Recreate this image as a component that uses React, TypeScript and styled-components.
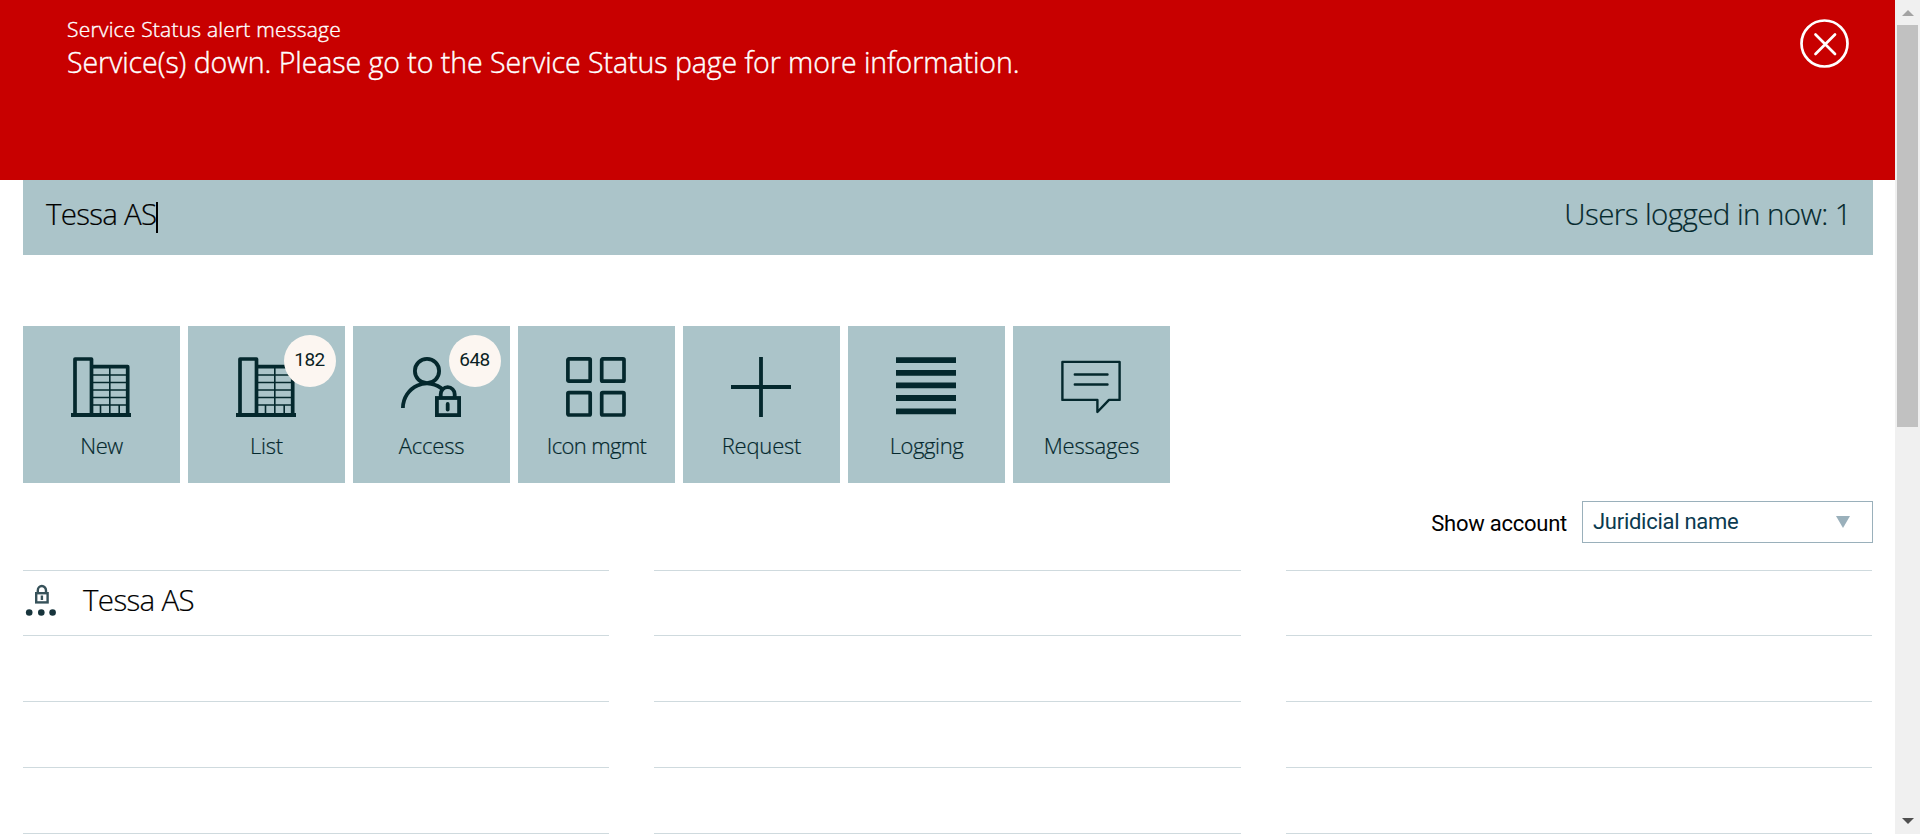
import React from "react";
import styled, { createGlobalStyle } from "styled-components";

const teal = "#abc4c9";
const ink = "#04282d";

const GlobalStyle = createGlobalStyle`
  * { box-sizing: border-box; }
  body {
    margin: 0;
    background: #fff;
    color: #000;
    font-family: "Open Sans", "Noto Sans", sans-serif;
    overflow: hidden;
  }
  svg { display: block; flex-shrink: 0; }
`;

const Screen = styled.div`
  display: flex;
  height: 834px;
  overflow: hidden;
`;

const Page = styled.main`
  flex: 1;
  min-width: 0;
`;

const Alert = styled.section`
  display: flex;
  justify-content: space-between;
  align-items: flex-start;
  height: 180px;
  padding: 14px 45px 0 67px;
  background: #c80000;
  color: #fff;
  font-weight: 300;
  -webkit-text-stroke: 0.4px #fff;
`;

const AlertTitle = styled.div`
  font-size: 21px;
  line-height: 30px;
  letter-spacing: 0.21px;
  white-space: nowrap;
`;

const AlertText = styled.div`
  font-size: 28.5px;
  line-height: 36px;
  letter-spacing: -0.05px;
  white-space: nowrap;
`;

const CloseButton = styled.button`
  margin: 4px 0 0;
  padding: 0;
  border: 0;
  background: none;
  color: #fff;
`;

const Content = styled.div`
  padding: 0 22px 0 23px;
`;

const CompanyBar = styled.header`
  display: flex;
  justify-content: space-between;
  align-items: flex-start;
  height: 75px;
  padding: 14px 22px 0 23px;
  background: ${teal};
  font-size: 29.5px;
  font-weight: 300;
  line-height: 40px;
  -webkit-text-stroke: 0.2px currentColor;
`;

const SearchField = styled.div`
  display: flex;
  align-items: center;
  letter-spacing: -0.75px;
`;

const Caret = styled.span`
  width: 2px;
  height: 31px;
  margin-top: 7px;
  background: #000;
`;

const UserCount = styled.div`
  color: ${ink};
  letter-spacing: -0.58px;
`;

const Tiles = styled.nav`
  display: flex;
  gap: 8px;
  margin-top: 71px;
`;

const Tile = styled.div`
  position: relative;
  display: flex;
  flex-direction: column;
  align-items: center;
  width: 157px;
  height: 157px;
  padding-top: 31px;
  background: ${teal};
  color: ${ink};

  > svg { margin-right: 1px; }
`;

const TileLabel = styled.span<{ $tracking: number }>`
  margin-top: 13px;
  font-size: 22px;
  font-weight: 300;
  line-height: 30px;
  letter-spacing: ${(p) => p.$tracking}px;
  white-space: nowrap;
  -webkit-text-stroke: 0.2px currentColor;
`;

const Badge = styled.span`
  position: absolute;
  top: 9px;
  right: 9px;
  width: 52px;
  height: 52px;
  padding-right: 1px;
  border-radius: 50%;
  background: #fcf6f1;
  color: #0b1f24;
  font: 400 19px/50px Roboto, sans-serif;
  letter-spacing: -0.5px;
  text-align: center;
`;

const FilterRow = styled.div`
  display: flex;
  justify-content: flex-end;
  gap: 15px;
  height: 42px;
  margin-top: 18px;
  font-family: Roboto, sans-serif;
  font-size: 22px;
  font-weight: 400;
`;

const FilterLabel = styled.span`
  line-height: 46px;
  letter-spacing: -0.25px;
`;

const Select = styled.div`
  display: flex;
  justify-content: space-between;
  align-items: center;
  width: 291px;
  padding: 0 22px 2px 10px;
  border: 1px solid #9ab0bb;
  color: #0b3a50;
  letter-spacing: -0.28px;

  > svg { margin-top: 2px; }
`;

const Columns = styled.div`
  display: grid;
  grid-template-columns: 586px 587px 586px;
  column-gap: 45px;
  margin-top: 27px;
`;

const Column = styled.div`
  border-top: 1px solid #cfdade;
`;

const Row = styled.div<{ $first?: boolean }>`
  display: flex;
  align-items: center;
  height: ${(p) => (p.$first ? 65 : 66)}px;
  border-bottom: 1px solid #cfdade;

  > svg { margin-bottom: 8px; }
`;

const RowName = styled.span`
  margin: -6px 0 0 26px;
  font-size: 29.5px;
  font-weight: 300;
  line-height: 40px;
  letter-spacing: -0.65px;
  -webkit-text-stroke: 0.2px currentColor;
`;

const Scrollbar = styled.aside`
  display: flex;
  flex-direction: column;
  align-items: center;
  width: 25px;
  padding: 10px 0;
  background: #f0f0f0;
`;

const Thumb = styled.div`
  width: 21px;
  height: 402px;
  margin: 9px 0 auto;
  background: #c1c1c1;
`;

const BuildingIcon = () => (
  <svg width="60" height="60" fill="none" stroke="currentColor" strokeLinejoin="round">
    <path d="M4 57V2H20.5V57M20.5 9.7H56.7V57" strokeWidth="3.7" />
    <path d="M0 58H60" strokeWidth="3.8" />
    <path d="M22 18H56M22 25.5H56M22 33H56M22 40.5H56M22 48H56M38.8 10V57M29.5 48V57M48.2 48V57" strokeWidth="1.6" />
  </svg>
);

const AccessIcon = () => (
  <svg width="60" height="60" fill="none" stroke="currentColor" strokeWidth="3.8">
    <circle cx="26" cy="14" r="12.1" />
    <path d="M1.9 51A24.2 24.7 0 0 1 42.5 33" />
    <rect x="35.9" y="41" width="22.2" height="17.1" />
    <path d="M39.7 41V37.2a7 7 0 0 1 14 0V41" />
    <path d="M46.7 47V52.5" strokeLinecap="round" />
  </svg>
);

const GridIcon = () => (
  <svg width="60" height="60" fill="none" stroke="currentColor" strokeWidth="3.7">
    <rect x="1.9" y="1.9" width="22.3" height="22.3" rx="1" />
    <rect x="35.7" y="1.9" width="22.3" height="22.3" rx="1" />
    <rect x="1.9" y="35.7" width="22.3" height="22.3" rx="1" />
    <rect x="35.7" y="35.7" width="22.3" height="22.3" rx="1" />
  </svg>
);

const PlusIcon = () => (
  <svg width="60" height="60" stroke="currentColor" strokeWidth="3.8">
    <path d="M30 0V60M0 30H60" />
  </svg>
);

const LinesIcon = () => (
  <svg width="60" height="60" stroke="currentColor" strokeWidth="5.8">
    <path d="M0 3.1H60M0 15.9H60M0 28.4H60M0 41H60M0 54.3H60" />
  </svg>
);

const MessageIcon = () => (
  <svg width="60" height="60" fill="none" stroke="currentColor" strokeWidth="2.4" strokeLinejoin="round" strokeLinecap="round">
    <path d="M1.4 4.9H58.6V42.9H48L36.4 55V42.9H1.4ZM13.8 17.5H46.5M13.8 27.5H46.5" />
  </svg>
);

const PinLockIcon = () => (
  <svg width="34" height="34" fill="none" stroke="#37525a" strokeWidth="2.4">
    <rect x="13.2" y="11.2" width="11.4" height="9.2" />
    <path d="M14.8 11V8.5a4.1 4.5 0 0 1 8.2 0V11M18.9 13.5V18" />
    <g fill="#17343c" stroke="none">
      <circle cx="6.2" cy="30.5" r="3.3" />
      <circle cx="18.3" cy="30.5" r="3.3" />
      <circle cx="29.6" cy="30.5" r="3.3" />
    </g>
  </svg>
);

const CloseIcon = () => (
  <svg width="50" height="50" fill="none" stroke="currentColor" strokeWidth="2.7" strokeLinecap="round">
    <circle cx="24.5" cy="25.5" r="23" />
    <path d="M15.5 16.5L35 36M35 16.5L15.5 36" />
  </svg>
);

const tiles = [
  { label: "New", icon: <BuildingIcon />, tracking: -0.5 },
  { label: "List", icon: <BuildingIcon />, tracking: -0.2, count: 182 },
  { label: "Access", icon: <AccessIcon />, tracking: -0.2, count: 648 },
  { label: "Icon mgmt", icon: <GridIcon />, tracking: -0.65 },
  { label: "Request", icon: <PlusIcon />, tracking: -0.2 },
  { label: "Logging", icon: <LinesIcon />, tracking: -0.4 },
  { label: "Messages", icon: <MessageIcon />, tracking: -0.2 },
];

const accounts = [["Tessa AS", "", "", ""], ["", "", "", ""], ["", "", "", ""]];

export default function App() {
  return (
    <Screen>
      <GlobalStyle />
      <Page>
        <Alert>
          <div>
            <AlertTitle>Service Status alert message</AlertTitle>
            <AlertText>Service(s) down. Please go to the Service Status page for more information.</AlertText>
          </div>
          <CloseButton aria-label="Close"><CloseIcon /></CloseButton>
        </Alert>
        <Content>
          <CompanyBar>
            <SearchField>Tessa AS<Caret /></SearchField>
            <UserCount>Users logged in now: 1</UserCount>
          </CompanyBar>
          <Tiles>
            {tiles.map((t) => (
              <Tile key={t.label}>
                {t.icon}
                <TileLabel $tracking={t.tracking}>{t.label}</TileLabel>
                {t.count && <Badge>{t.count}</Badge>}
              </Tile>
            ))}
          </Tiles>
          <FilterRow>
            <FilterLabel>Show account</FilterLabel>
            <Select>
              Juridicial name
              <svg width="14" height="12" fill="#9ab0bb"><path d="M0 0H14L7 12Z" /></svg>
            </Select>
          </FilterRow>
          <Columns>
            {accounts.map((rows, c) => (
              <Column key={c}>
                {rows.map((name, i) => (
                  <Row key={i} $first={i === 0}>
                    {name && <><PinLockIcon /><RowName>{name}</RowName></>}
                  </Row>
                ))}
              </Column>
            ))}
          </Columns>
        </Content>
      </Page>
      <Scrollbar>
        <svg width="12" height="6" fill="#a3a3a3"><path d="M0 6L6 0L12 6Z" /></svg>
        <Thumb />
        <svg width="12" height="6" fill="#505050"><path d="M0 0H12L6 6Z" /></svg>
      </Scrollbar>
    </Screen>
  );
}
